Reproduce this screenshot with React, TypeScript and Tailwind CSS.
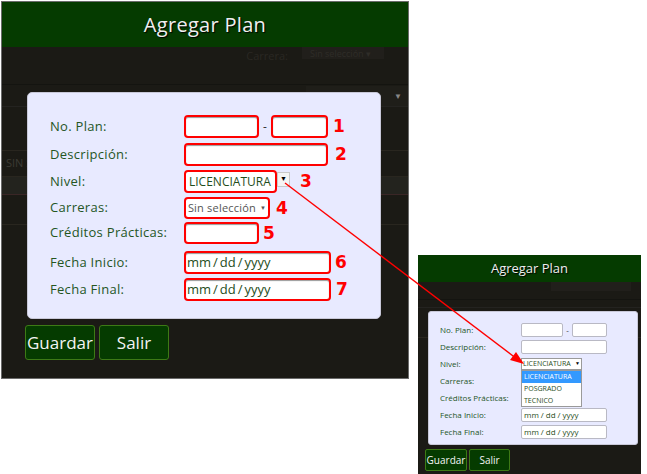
import React from 'react';

const font = "font-['Open_Sans',sans-serif]";

function Num({ n, className = '' }: { n: string; className?: string }) {
  return (
    <span className={`font-['DejaVu_Sans',sans-serif] font-bold text-[17px] leading-none text-[#ff0000] ${className}`}>
      {n}
    </span>
  );
}

function DateText({ size }: { size: string }) {
  return (
    <span className={`${size} flex items-center`}>
      mm<span className="mx-[2px]">/</span>dd<span className="mx-[2px]">/</span>yyyy
    </span>
  );
}

function RedInput({ w, date }: { w: string; date?: boolean }) {
  return (
    <div
      className={`${w} h-full bg-white border-2 border-[#ff0000] rounded-[4px] shadow-[inset_0_1px_1px_#9a9a9a] flex items-center px-[1px] text-[#1f4d1b]`}
    >
      {date && <DateText size="text-[13px]" />}
    </div>
  );
}

function Row({ label, h, mt, children }: { label: string; h: string; mt: string; children: React.ReactNode }) {
  return (
    <div className={`flex items-center ${h} ${mt}`}>
      <span className="w-[134px] shrink-0 text-[13px] text-[#25561f] tracking-[0.3px]">{label}</span>
      <div className="flex items-center h-full">{children}</div>
    </div>
  );
}

function BigShot() {
  return (
    <div className={`absolute left-[1px] top-[1px] w-[408px] h-[378px] bg-[#1b1a15] border border-[#6b6b6b] overflow-hidden flex flex-col ${font}`}>
      <div className="h-[45px] shrink-0 bg-[#053b00] flex items-center justify-center">
        <span className="text-[20px] text-[#f0f0f0] [text-shadow:1px_1px_1px_#000] tracking-[0.3px]">Agregar Plan</span>
      </div>
      {/* ghost page content behind the dialog */}
      <div className="relative flex-1 flex flex-col">
        <div className="h-[38px] flex items-start justify-end pr-[24px] border-b border-[#141410]">
          <span className="text-[11px] text-[#2a2823] mt-[1px] mr-[14px]">Carrera:</span>
          <span className="w-[82px] h-[12px] bg-[#211f1b] text-[9px] text-[#2f2d28] px-[8px]">Sin selección ▾</span>
        </div>
        <div className="h-[22px] flex justify-end items-center border-b border-[#242320]">
          <div className="w-[102px] h-[20px] bg-[#1f1e19] flex items-center justify-end pr-[6px] text-[8px] text-[#888]">▼</div>
        </div>
        <div className="h-[44px] border-b border-[#29261f]" />
        <div className="h-[26px] flex items-center pl-[4px] text-[11px] text-[#3b3a34] border-b border-[#29261f]">SIN S</div>
        <div className="h-[18px] bg-[#23231e] border-b border-[#3a2626]" />
        <div className="h-[30px] border-b border-[#29261f]" />

        <div className="absolute left-[25px] top-[45px] w-[354px] h-[227px] bg-[#e8eaff] rounded-[5px] border border-[#c8c8d8] pt-[22px] pl-[22px]">
          <Row label="No. Plan:" h="h-[23px]" mt="">
            <RedInput w="w-[75px]" />
            <span className="w-[12px] text-center text-[12px] text-[#333]">-</span>
            <RedInput w="w-[57px]" />
            <Num n="1" className="ml-[5px]" />
          </Row>
          <Row label="Descripción:" h="h-[23px]" mt="mt-[5px]">
            <RedInput w="w-[144px]" />
            <Num n="2" className="ml-[7px]" />
          </Row>
          <Row label="Nivel:" h="h-[23px]" mt="mt-[4px]">
            <div className="w-[93px] h-full bg-white border-2 border-[#ff0000] rounded-[4px] flex items-center pl-[3px] text-[12px] text-[#1f4d1b]">
              LICENCIATURA
            </div>
            <div className="self-start mt-[2px] w-[13px] h-[15px] bg-[#f4f4f4] border border-[#c9c9c9] flex items-center justify-center text-[7px] text-black">▼</div>
            <Num n="3" className="ml-[10px]" />
          </Row>
          <Row label="Carreras:" h="h-[22px]" mt="mt-[4px]">
            <div className="w-[86px] h-full bg-white border-2 border-[#ff0000] rounded-[4px] flex items-center justify-center gap-[4px] text-[11px] text-[#555] tracking-[0.2px]">
              Sin selección <span className="text-[6px]">▼</span>
            </div>
            <Num n="4" className="ml-[6px]" />
          </Row>
          <Row label="Créditos Prácticas:" h="h-[22px]" mt="mt-[3px]">
            <RedInput w="w-[75px]" />
            <Num n="5" className="ml-[4px]" />
          </Row>
          <Row label="Fecha Inicio:" h="h-[23px]" mt="mt-[7px]">
            <RedInput w="w-[147px]" date />
            <Num n="6" className="ml-[4px]" />
          </Row>
          <Row label="Fecha Final:" h="h-[23px]" mt="mt-[4px]">
            <RedInput w="w-[147px]" date />
            <Num n="7" className="ml-[5px]" />
          </Row>
        </div>

        <div className="absolute left-[23px] top-[278px] flex gap-[4px]">
          <button className="w-[70px] h-[35px] bg-[#053b00] border border-[#3d7a16] rounded-[3px] text-[17px] text-[#f4f4f4]">Guardar</button>
          <button className="w-[70px] h-[35px] bg-[#053b00] border border-[#3d7a16] rounded-[3px] text-[17px] text-[#f4f4f4]">Salir</button>
        </div>
      </div>
    </div>
  );
}

function SmallRow({ label, children }: { label: string; children?: React.ReactNode }) {
  return (
    <div className="flex items-center h-[14px]">
      <span className="w-[81px] shrink-0 text-[8px] text-[#25561f]">{label}</span>
      <div className="flex items-center h-full">{children}</div>
    </div>
  );
}

function SmallInput({ w, date }: { w: string; date?: boolean }) {
  return (
    <div className={`${w} h-full bg-white border border-[#b9b9c4] rounded-[2px] flex items-center pl-[2px] text-[#1f4d1b]`}>
      {date && <DateText size="text-[8px]" />}
    </div>
  );
}

function SmallShot() {
  return (
    <div className={`absolute left-[418px] top-[255px] w-[223px] h-[219px] bg-[#1b1a15] overflow-hidden flex flex-col ${font}`}>
      <div className="h-[27px] shrink-0 bg-[#053b00] flex items-center justify-center">
        <span className="text-[13px] text-[#eeeeee] [text-shadow:1px_1px_1px_#000]">Agregar Plan</span>
      </div>
      <div className="relative flex-1 flex flex-col">
        <div className="h-[18px] flex justify-end pr-[10px] border-b border-[#141410]">
          <span className="w-[80px] h-[9px] bg-[#211f1b]" />
        </div>
        <div className="h-[8px] border-b border-[#242320]" />
        <div className="h-[30px] border-b border-[#29261f]" />

        <div className="absolute left-[10px] top-[29px] w-[210px] h-[134px] bg-[#e8eaff] rounded-[3px] border border-[#c8c8d8] pt-[11px] pl-[11px] flex flex-col gap-[3px]">
          <SmallRow label="No. Plan:">
            <SmallInput w="w-[42px]" />
            <span className="w-[9px] text-center text-[8px] text-[#333]">-</span>
            <SmallInput w="w-[35px]" />
          </SmallRow>
          <SmallRow label="Descripción:">
            <SmallInput w="w-[86px]" />
          </SmallRow>
          <SmallRow label="Nivel:">
            <div className="relative w-[61px] h-[12px] bg-white border border-[#9a9a9a] flex items-center justify-between px-[1px] text-[7px] text-[#1f4d1b]">
              LICENCIATURA <span className="text-[5px] text-black">▼</span>
              <div className="absolute left-[-1px] top-[11px] w-[61px] bg-white border border-[#9a9a9a] flex flex-col text-[7px] text-[#1f4d1b] z-10">
                <span className="h-[12px] leading-[12px] bg-[#3399ff] text-white pl-[2px]">LICENCIATURA</span>
                <span className="h-[12px] leading-[12px] pl-[2px]">POSGRADO</span>
                <span className="h-[11px] leading-[11px] pl-[2px]">TECNICO</span>
              </div>
            </div>
          </SmallRow>
          <SmallRow label="Carreras:" />
          <SmallRow label="Créditos Prácticas:" />
          <SmallRow label="Fecha Inicio:">
            <SmallInput w="w-[86px]" date />
          </SmallRow>
          <SmallRow label="Fecha Final:">
            <SmallInput w="w-[86px]" date />
          </SmallRow>
        </div>

        <div className="absolute left-[7px] top-[167px] flex gap-[2px]">
          <button className="w-[42px] h-[22px] bg-[#053b00] border border-[#3d7a16] rounded-[2px] text-[10px] text-[#f4f4f4]">Guardar</button>
          <button className="w-[41px] h-[22px] bg-[#053b00] border border-[#3d7a16] rounded-[2px] text-[10px] text-[#f4f4f4]">Salir</button>
        </div>
      </div>
    </div>
  );
}

export default function App() {
  return (
    <div className="relative w-[647px] h-[474px] bg-white overflow-hidden">
      <BigShot />
      <SmallShot />
      <svg className="absolute inset-0 pointer-events-none" width="647" height="474" viewBox="0 0 647 474">
        <line x1="285" y1="183" x2="517" y2="359" stroke="#ff0000" strokeWidth="1.4" />
        <polygon points="524,364 510,360 516,352" fill="#ff0000" />
      </svg>
    </div>
  );
}
